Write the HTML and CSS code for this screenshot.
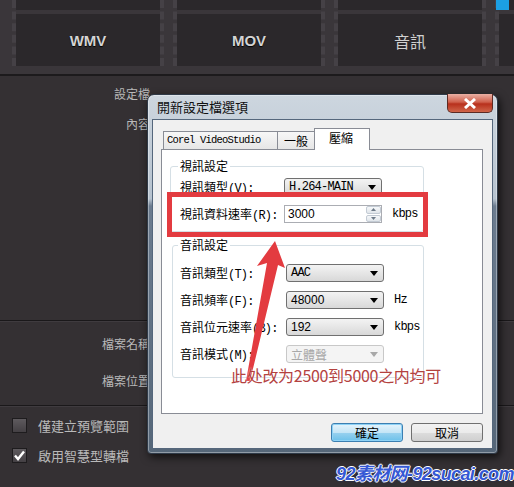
FILE: index.html
```html
<!DOCTYPE html>
<html lang="zh-Hant">
<head>
  <meta charset="UTF-8">
  <title>開新設定檔選項</title>
  <link rel="stylesheet" href="styles.css">
</head>
<body>

  <!-- Background app -->
  <div class="app">
    <div class="topbar">
      <div class="strip">
        <div class="tile"><div class="tile-top"></div><div class="tile-main fmt">WMV</div></div>
        <div class="tile"><div class="tile-top"></div><div class="tile-main fmt">MOV</div></div>
        <div class="tile"><div class="tile-top"></div><div class="tile-main fmt-cjk">音訊</div></div>
        <div class="tile tile-cut"><div class="tile-top"><div class="blue-tab"></div></div><div class="tile-main"></div></div>
      </div>
    </div>

    <div class="panel">
      <div class="sec sec-top">
        <div class="row"><span class="lbl">設定檔</span></div>
        <div class="row"><span class="lbl">內容</span></div>
      </div>
      <div class="sec sec-file">
        <div class="row tall"><span class="lbl">檔案名稱</span></div>
        <div class="row tall"><span class="lbl">檔案位置</span></div>
      </div>
      <div class="sec sec-opts">
        <div class="opt"><span class="chk"></span><span>僅建立預覽範圍</span></div>
        <div class="opt">
          <span class="chk">
            <svg width="13" height="13" viewBox="0 0 13 13"><path d="M2 6.5 L5 10 L11 2.5" fill="none" stroke="#fff" stroke-width="2.4"/></svg>
          </span>
          <span>啟用智慧型轉檔</span>
        </div>
      </div>
    </div>
  </div>

  <!-- Dialog -->
  <div class="dialog">
    <div class="dlg-title">開新設定檔選項</div>
    <div class="dlg-close">
      <svg width="14" height="11" viewBox="0 0 14 11"><path d="M2 1 L12 10 M12 1 L2 10" stroke="#fff" stroke-width="3"/></svg>
    </div>
    <div class="dlg-client">
      <div class="tabs">
        <div class="tab mono">Corel VideoStudio</div>
        <div class="tab">一般</div>
        <div class="tab active">壓縮</div>
      </div>
      <div class="tab-panel">
        <fieldset class="group g-video">
          <legend>視訊設定</legend>
          <div class="form">
            <span class="flbl">視訊類型<span class="m">(V):</span></span>
            <div class="sel"><span class="mono">H.264-MAIN</span><svg class="dd" width="8" height="5" viewBox="0 0 8 5"><path d="M0 0H8L4 5Z" fill="#000"/></svg></div>
            <span></span>
            <span class="flbl">視訊資料速率<span class="m">(R):</span></span>
            <div class="spin">
              <span class="num">3000</span>
              <div class="spin-btns">
                <span><svg width="5" height="3" viewBox="0 0 5 3"><path d="M0 3H5L2.5 0Z" fill="#6d7a88"/></svg></span>
                <span><svg width="5" height="3" viewBox="0 0 5 3"><path d="M0 0H5L2.5 3Z" fill="#6d7a88"/></svg></span>
              </div>
            </div>
            <span class="unit">kbps</span>
          </div>
        </fieldset>

        <fieldset class="group g-audio">
          <legend>音訊設定</legend>
          <div class="form">
            <span class="flbl">音訊類型<span class="m">(T):</span></span>
            <div class="sel"><span class="mono">AAC</span><svg class="dd" width="8" height="5" viewBox="0 0 8 5"><path d="M0 0H8L4 5Z" fill="#000"/></svg></div>
            <span></span>
            <span class="flbl">音訊頻率<span class="m">(F):</span></span>
            <div class="sel"><span class="num">48000</span><svg class="dd" width="8" height="5" viewBox="0 0 8 5"><path d="M0 0H8L4 5Z" fill="#000"/></svg></div>
            <span class="unit">Hz</span>
            <span class="flbl">音訊位元速率<span class="m">(B):</span></span>
            <div class="sel"><span class="num">192</span><svg class="dd" width="8" height="5" viewBox="0 0 8 5"><path d="M0 0H8L4 5Z" fill="#000"/></svg></div>
            <span class="unit">kbps</span>
            <span class="flbl">音訊模式<span class="m">(M):</span></span>
            <div class="sel disabled"><span>立體聲</span><svg class="dd" width="8" height="5" viewBox="0 0 8 5"><path d="M0 0H8L4 5Z" fill="#a8a8a8"/></svg></div>
            <span></span>
          </div>
        </fieldset>
      </div>
      <div class="dlg-btns">
        <button class="btn primary">確定</button>
        <button class="btn">取消</button>
      </div>
    </div>
  </div>

  <!-- Annotations -->
  <div class="mark-box"></div>
  <svg class="mark-arrow" width="514" height="487" viewBox="0 0 514 487">
    <path d="M275 241 L285 268 L278 265 L250 381 L246 381 L267 263 L257 266 Z" fill="#e33b40"/>
  </svg>
  <div class="mark-note">此处改为2500到5000之内均可</div>
  <div class="watermark">92素材网-92sucai.com</div>

</body>
</html>
```

FILE: styles.css
```css
body { margin: 0; width: 514px; height: 487px; overflow: hidden; background: #343033; font-family: "Noto Sans CJK TC", sans-serif; position: relative; }

/* top format strip */
.topbar { height: 74px; background: #3a363a; border-bottom: 2px solid #1c1a1c; }
.strip { display: flex; gap: 9px; padding-left: 12px; }
.tile { width: 152px; flex: none; height: 66px; display: flex; flex-direction: column; box-sizing: border-box; border-left: 4px dashed #454146; border-right: 4px dashed #454146; }
.tile-top { height: 10px; background: #2b282b; }
.tile-main { height: 52px; margin-top: 4px; background: #2b282b; display: flex; align-items: center; justify-content: center; }
.tile-cut { width: 30px; }
.blue-tab { width: 13px; height: 10px; background: #1c9fe3; margin-left: -3px; }
.fmt { font-family: "Liberation Sans", sans-serif; font-weight: bold; font-size: 15px; color: #d4d4d4; text-shadow: 0 1px 1px #000; padding-top: 2px; }
.fmt-cjk { font-size: 16px; color: #d0d0d0; padding-top: 2px; }

/* app form */
.panel { color: #b9b9b9; font-size: 12px; }
.sec-top { height: 245px; padding-top: 2px; box-sizing: border-box; border-bottom: 1px solid #1a181a; }
.sec-file { height: 85px; padding-top: 3px; box-sizing: border-box; border-top: 1px solid #3f3b3f; border-bottom: 1px solid #1a181a; }
.sec-opts { padding-top: 3px; border-top: 1px solid #3f3b3f; }
.row { height: 30px; display: flex; align-items: center; }
.row.tall { height: 37px; }
.lbl { width: 150px; text-align: right; }
.opt { height: 30px; display: flex; align-items: center; gap: 11px; padding-left: 12px; font-size: 13px; }
.chk { width: 15px; height: 15px; box-sizing: border-box; border: 1px solid #1e1c1e; background: linear-gradient(#5e5a5e, #444044); display: flex; align-items: center; justify-content: center; }

/* dialog */
.dialog { position: absolute; left: 147px; top: 94px; width: 351px; box-sizing: border-box; border: 1px solid #2f3a48; border-radius: 7px 7px 4px 4px; padding: 0 4px 4px 4px; background: linear-gradient(#cdd6df 0%, #b6c2ce 29%, #6c7c8f 31%, #566779 100%); box-shadow: 0 0 0 1px rgba(255,255,255,0.35) inset, 2px 3px 8px rgba(0,0,0,0.7); }
.dlg-title { height: 24px; line-height: 24px; padding-left: 5px; font-size: 13px; color: #111; }
.dlg-close { position: absolute; right: 4px; top: -1px; width: 46px; height: 19px; box-sizing: border-box; border: 1px solid #5c2b24; border-top: none; border-radius: 0 0 5px 5px; background: linear-gradient(#eab0a4, #d0604c 45%, #b8301c 55%, #d0654a); display: flex; align-items: center; justify-content: center; }
.dlg-client { height: 330px; box-sizing: border-box; border: 1px solid #55677c; background: #f0f0f0; padding: 8px 9px 0 8px; }

.tabs { display: flex; align-items: flex-end; height: 21px; padding-left: 2px; position: relative; z-index: 1; }
.tab { height: 18px; box-sizing: border-box; border: 1px solid #898c95; border-bottom: none; margin-right: -1px; background: linear-gradient(#f7f7f7, #e6e6e6); font-size: 12px; line-height: 17px; padding: 0 6px; color: #000; }
.tab.mono { font-family: "Liberation Mono", monospace; font-size: 10.5px; padding: 0 3px; width: 115px; }
.tab.active { height: 22px; margin-bottom: -1px; background: #fff; width: 56px; padding-left: 14px; line-height: 18px; }
.tab-panel { height: 265px; box-sizing: border-box; border: 1px solid #898c95; background: #fff; padding-top: 9px; }

.group { margin: 0 0 0 8px; width: 254px; box-sizing: border-box; border: 1px solid #d5dfe5; border-radius: 3px; padding: 5px 0 8px 9px; }
.group legend { padding: 0 2px; margin-left: -2px; font-size: 12px; line-height: 14px; color: #000; }
.g-audio { margin-top: 6px; padding-top: 12px; padding-bottom: 14px; padding-left: 7px; margin-left: 10px; width: 252px; }
.form { display: grid; grid-template-columns: 104px 98px auto; grid-auto-rows: 18px; row-gap: 9px; align-items: center; }
.g-audio .form { grid-template-columns: 106px 98px auto; }
.flbl { font-size: 12px; color: #000; white-space: nowrap; }
.m, .unit, .mono { font-family: "Liberation Mono", monospace; letter-spacing: -0.8px; }
.unit { font-size: 12px; padding-left: 10px; color: #000; }
.num { font-family: "Liberation Sans", sans-serif; font-size: 12px; }

.sel { height: 18px; box-sizing: border-box; border: 1px solid #707070; border-radius: 3px; background: linear-gradient(#f3f3f3, #e6e6e6 50%, #d8d8d8); display: flex; align-items: center; justify-content: space-between; padding: 0 5px 0 4px; font-size: 12px; color: #000; }
.sel.disabled { border-color: #c8c8c8; background: #f4f4f4; color: #a8a8a8; }
.spin { height: 18px; box-sizing: border-box; border: 1px solid #abadb3; display: flex; align-items: center; justify-content: space-between; padding-left: 3px; }
.spin-btns { width: 15px; height: 16px; display: flex; flex-direction: column; gap: 1px; }
.spin-btns span { flex: 1; border: 1px solid #c3cbd4; border-radius: 2px; background: linear-gradient(#f6f8fa, #e0e5ea); display: flex; align-items: center; justify-content: center; }

.dlg-btns { display: flex; justify-content: flex-end; gap: 8px; padding-top: 9px; }
.btn { width: 72px; height: 19px; padding: 0; margin: 0; box-sizing: border-box; border: 1px solid #707070; border-radius: 3px; background: linear-gradient(#f2f2f2, #ebebeb 50%, #dddddd 51%, #cfcfcf); font-family: "Noto Sans CJK TC", sans-serif; font-size: 12px; line-height: 16px; color: #000; }
.btn.primary { border-color: #3c7fb1; background: linear-gradient(#e5f4fc, #c4e5f6 50%, #98d1ef 51%, #6cc1ea); box-shadow: 0 0 0 1px #8ed2f6 inset; }

/* annotations */
.mark-box { position: absolute; left: 167px; top: 192px; width: 261px; height: 45px; box-sizing: border-box; border: 5px solid #e33b40; }
.mark-arrow { position: absolute; left: 0; top: 0; pointer-events: none; }
.mark-note { position: absolute; left: 231px; top: 364px; font-family: "Noto Sans CJK SC", sans-serif; font-size: 16px; line-height: 22px; color: #b4423f; text-shadow: 0 0 2px #fff; white-space: nowrap; letter-spacing: -0.3px; }
.watermark { position: absolute; left: 336px; top: 459px; font-family: "Liberation Sans", "Noto Sans CJK SC", sans-serif; font-weight: bold; font-style: italic; font-size: 18px; letter-spacing: -0.6px; color: #3558d4; text-shadow: -1px 0 #fff, 1px 0 #fff, 0 -1px #fff, 0 1px #fff, 1px 1px 2px #1a2a60; white-space: nowrap; }
```
